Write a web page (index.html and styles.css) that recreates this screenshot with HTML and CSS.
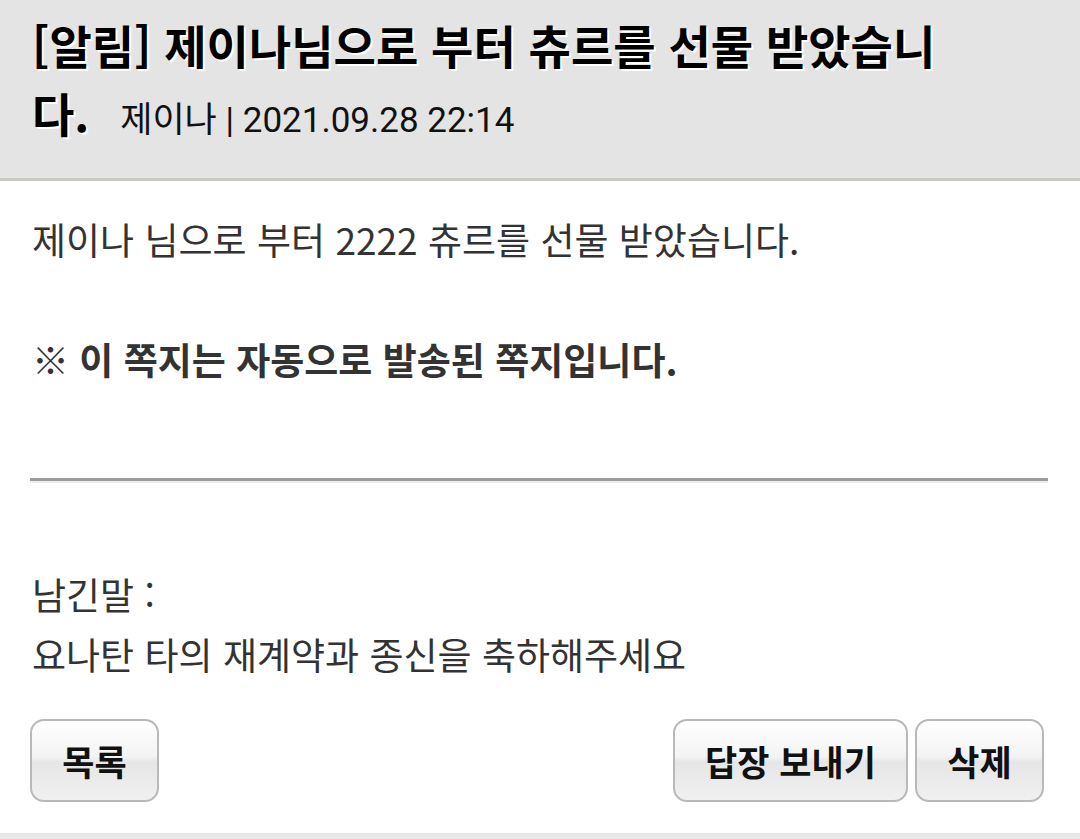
FILE: index.html
```html
<!DOCTYPE html>
<html lang="ko">
<head>
<meta charset="utf-8">
<link rel="stylesheet" href="styles.css">
</head>
<body>
<div class="page">
  <header class="head">
    <p class="headline"><strong class="title">[알림] 제이나님으로 부터 츄르를 선물 받았습니다.</strong> <span class="meta">제이나 | 2021.09.28 22:14</span></p>
  </header>
  <section class="content">
    <p class="msg">제이나 님으로 부터 2222 츄르를 선물 받았습니다.</p>
    <p class="note">※ 이 쪽지는 자동으로 발송된 쪽지입니다.</p>
    <div class="rule"></div>
    <p class="memo">남긴말 :<br>요나탄 타의 재계약과 종신을 축하해주세요</p>
    <div class="actions">
      <button class="btn btn-list">목록</button>
      <div class="right">
        <button class="btn btn-reply">답장 보내기</button>
        <button class="btn btn-del">삭제</button>
      </div>
    </div>
  </section>
  <div class="foot"></div>
</div>
</body>
</html>
```
FILE: styles.css
```css
html, body {
  margin: 0;
  padding: 0;
  background: #ffffff;
}
body {
  font-family: "Noto Sans CJK KR", "Noto Sans", sans-serif;
  color: #222;
}
.page {
  width: 1080px;
  height: 839px;
  display: flex;
  flex-direction: column;
  overflow: hidden;
}
.head {
  background: #e4e4e4;
  border-bottom: 3px solid #c9c9c2;
  height: 181px;
  box-sizing: border-box;
  padding: 10px 110px 0 32px;
}
.headline {
  margin: 0;
  line-height: 68px;
  font-size: 46px;
}
.title {
  font-size: 46px;
  font-weight: 700;
  color: #000;
  text-shadow: 2px 2px 0 #fff;
}
.meta {
  font-family: "Roboto", "Noto Sans CJK KR", sans-serif;
  font-size: 35px;
  font-weight: 400;
  margin-left: 18px;
  color: #111;
}
.content {
  flex: 1;
  padding: 0 32px 0 32px;
  display: flex;
  flex-direction: column;
}
.msg, .note, .memo {
  margin: 0;
  font-size: 37px;
  color: #333;
}
.msg {
  margin-top: 28px;
  line-height: 61px;
}
.note {
  margin-top: 59px;
  line-height: 61px;
  font-weight: 700;
}
.rule {
  margin: 88px 0 0 -2px;
  width: 1018px;
  height: 3px;
  background: #9c9c9c;
  border-bottom: 2px solid #ececec;
}
.memo {
  margin-top: 81px;
  line-height: 60px;
}
.actions {
  margin-top: 35px;
  display: flex;
  justify-content: space-between;
  padding-right: 4px;
  margin-left: -2px;
}
.right {
  display: flex;
  gap: 7px;
}
.btn {
  height: 83px;
  border: 2px solid #b9b9b9;
  border-radius: 14px;
  background: linear-gradient(#ffffff 0%, #f3f3f3 45%, #e6e6e6 52%, #f0f0f0 100%);
  font-family: "Noto Sans CJK KR", sans-serif;
  font-size: 35px;
  font-weight: 700;
  color: #111;
  padding: 0;
}
.btn-list { width: 129px; }
.btn-reply { width: 235px; }
.btn-del { width: 129px; }
.foot {
  height: 6px;
  background: #e8e8e8;
  margin-top: auto;
}
```
